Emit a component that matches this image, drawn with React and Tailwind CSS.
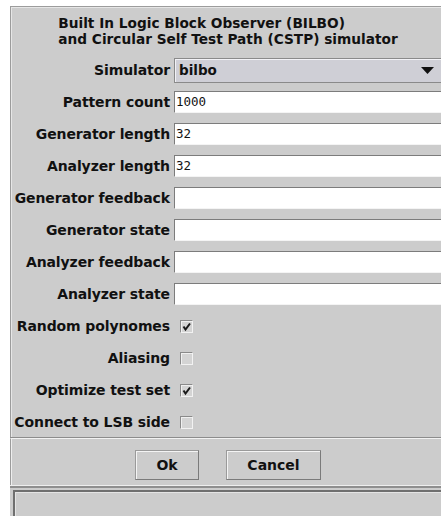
import React from "react";

const font = { fontFamily: '"DejaVu Sans", "Liberation Sans", sans-serif' };

function Label({ children }) {
  return (
    <div className="flex items-center justify-end h-full text-[14px] font-bold text-[#111] whitespace-nowrap tracking-[-0.1px]">
      {children}
    </div>
  );
}

function TextField({ value = "" }) {
  return (
    <div className="h-[22px] bg-white border border-t-[#7c7c7c] border-l-[#7c7c7c] border-b-[#f4f4f4] border-r-[#f4f4f4] flex items-center pl-[1px]">
      <span className="text-[12.5px] text-[#111]" style={{ fontFamily: '"DejaVu Sans Mono", "Liberation Mono", monospace' }}>
        {value}
      </span>
    </div>
  );
}

function CheckBox({ checked }) {
  return (
    <div className="h-[22px] flex items-center">
      <div className="ml-[6px] w-[13px] h-[13px] border border-t-[#8a8a8a] border-l-[#8a8a8a] border-b-[#f2f2f2] border-r-[#f2f2f2] bg-[#d4d4d4] shadow-[inset_1px_1px_0_#f0f0f0] flex items-center justify-center">
        {checked && (
          <svg width="11" height="11" viewBox="0 0 11 11">
            <path d="M2.5 5.5 L4.5 8.5 L9 2.5" fill="none" stroke="#1a1a1a" strokeWidth="2" />
          </svg>
        )}
      </div>
    </div>
  );
}

const fields = [
  ["Pattern count", "1000"],
  ["Generator length", "32"],
  ["Analyzer length", "32"],
  ["Generator feedback", ""],
  ["Generator state", ""],
  ["Analyzer feedback", ""],
  ["Analyzer state", ""],
];

const checks = [
  ["Random polynomes", true],
  ["Aliasing", false],
  ["Optimize test set", true],
  ["Connect to LSB side", false],
];

export default function App() {
  return (
    <div className="w-[441px] h-[516px] overflow-hidden bg-white" style={font}>
      <div className="ml-[10px] mt-[6px] w-[435px] bg-[#cccccc]">
        {/* form panel */}
        <div className="border-t border-l border-[#9c9c9c] shadow-[inset_1px_1px_0_#e6e6e6] pb-[4px]">
          <div className="pt-[8px] flex justify-center text-[13.7px] font-bold leading-[16px] text-[#111]">
            <div className="text-left">
              <div>Built In Logic Block Observer (BILBO)</div>
              <div>and Circular Self Test Path (CSTP) simulator</div>
            </div>
          </div>

          <div className="mt-[11px] grid grid-cols-[159px_1fr] gap-x-[4px]">
            <Label>Simulator</Label>
            <div className="h-[25px] mr-[2px] border border-[#8a8a8a] bg-[#cfcfd6] shadow-[inset_1px_1px_0_#f2f2f6] flex items-center justify-between pl-[4px] pr-[8px]">
              <span className="text-[13.5px] font-bold text-[#111]">bilbo</span>
              <svg width="13" height="7" viewBox="0 0 13 7">
                <path d="M0 0 H13 L6.5 7 Z" fill="#111" />
              </svg>
            </div>
          </div>

          <div className="mt-[8px] grid grid-cols-[159px_1fr] gap-x-[4px] gap-y-[10px] mr-[2px]">
            {fields.map(([label, value]) => (
              <React.Fragment key={label}>
                <Label>{label}</Label>
                <TextField value={value} />
              </React.Fragment>
            ))}
            {checks.map(([label, checked]) => (
              <React.Fragment key={label}>
                <Label>{label}</Label>
                <CheckBox checked={checked} />
              </React.Fragment>
            ))}
          </div>
        </div>

        {/* button bar */}
        <div className="border-t border-[#8c8c8c]">
          <div className="border-t border-l border-[#f2f2f2] border-l-[#9c9c9c] shadow-[inset_1px_0_0_#eeeeee] h-[47px] flex items-start justify-center gap-[27px] pt-[11px]">
            <button className="w-[64px] h-[30px] border border-t-[#9a9a9a] border-l-[#9a9a9a] border-b-[#7a7a7a] border-r-[#7a7a7a] shadow-[inset_1px_1px_0_#f4f4f4] bg-[#cccccc] text-[14px] font-bold text-[#111]">
              Ok
            </button>
            <button className="w-[95px] h-[30px] border border-t-[#9a9a9a] border-l-[#9a9a9a] border-b-[#7a7a7a] border-r-[#7a7a7a] shadow-[inset_1px_1px_0_#f4f4f4] bg-[#cccccc] text-[14px] font-bold text-[#111]">
              Cancel
            </button>
          </div>
          <div className="h-[1px] bg-[#eeeeee]" />
          <div className="h-[2px] bg-[#8e8e8e]" />
        </div>

        {/* status line */}
        <div className="pt-[2px] pl-[3px] bg-[#cccccc]">
          <div className="h-[30px] border-t-2 border-l-2 border-[#6f6f6f] shadow-[inset_1px_1px_0_#e4e4e4]" />
        </div>
      </div>
    </div>
  );
}
